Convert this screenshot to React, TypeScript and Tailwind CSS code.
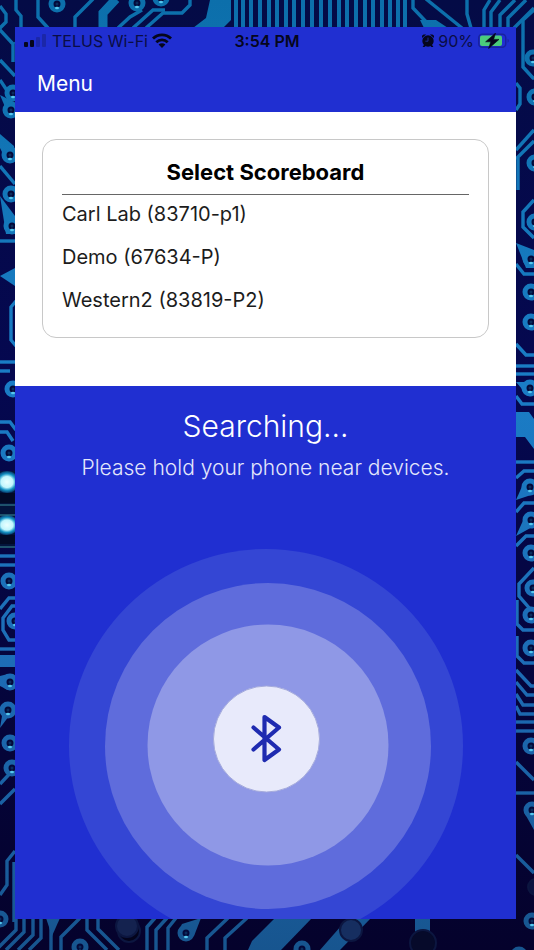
interface Scoreboard {
  id: string;
  name: string;
}

const scoreboards: Scoreboard[] = [
  { id: '83710-p1', name: 'Carl Lab' },
  { id: '67634-P', name: 'Demo' },
  { id: '83819-P2', name: 'Western2' },
];

// vertical traces along the top edge of the board
const stripes = [236, 243, 251, 260, 269, 277, 286, 294, 303, 312, 321, 330, 339, 347, 356, 365, 373, 382, 390, 398, 405];

// solder pads, [x, y]
const pads = [
  [57, 4], [137, 3], [161, -2], [13, 93], [11, 110], [10, 155], [11, 194], [12, 226], [13, 389], [9, 453],
  [9, 581], [15, 621], [10, 682], [8, 710], [10, 743], [12, 768], [0, 919], [80, 947], [186, 933], [302, 949],
  [533, 58], [535, 97], [535, 163], [535, 222], [531, 259], [531, 292], [531, 322], [530, 388], [530, 487],
  [531, 520], [531, 553], [533, 588], [531, 615], [531, 648], [531, 746], [532, 810], [532, 921], [519, 955],
];

const tracePaths = [
  // top
  'M-2 30L6 22V14L0 6', 'M16 0V10L21 16V38L15 44', 'M38 0V17L48 28', 'M75 28V17L93 -1',
  'M118 28L130 17L142 10', 'M133 28L153 10H165', 'M146 28L163 13H182L190 5V0',
  'M413 0V8L432 28', 'M426 -1L462 28', 'M467 0V14L471 28',
  'M484 28V10L490 0', 'M491 28V12L500 0', 'M500 28V15L515 0', 'M508 28V18L526 0', 'M514 28L534 8',
  // left
  'M0 30L13 44V62', 'M0 60L15 76', 'M0 80L8 92', 'M0 166L15 184', 'M0 241H16', 'M16 301L11 307V340L16 346',
  'M0 362H16', 'M0 371H10', 'M0 422H10L16 430', 'M0 432H7L13 441', 'M0 556H16', 'M0 565H16', 'M16 598H9L0 609',
  'M16 606H12L3 618V630L9 640H16', 'M0 649H16', 'M0 784L15 768', 'M0 804L15 789',
  'M15 851L7 861V885L0 895', 'M14 862V922',
  // right
  'M540 78H533L523 67V20L534 10', 'M516 83L520 88V104L516 110', 'M516 150L534 130', 'M516 159L534 141',
  'M518 158V190', 'M534 200L523 212V227L534 238', 'M516 264L524 274H534', 'M516 344L526 355H534',
  'M516 366H534', 'M516 374H534', 'M516 396L522 404H534', 'M516 462H534', 'M516 478L524 471H534',
  'M516 512L524 503H534', 'M516 546L526 536H534', 'M534 568L519 584V596L531 610', 'M517 600V624L523 630H534',
  'M517 636V656L524 663H534', 'M516 670L531 686H534', 'M516 682L527 695H534', 'M516 694L523 705H534',
  'M516 706L520 714H534', 'M516 722H534', 'M516 731H534', 'M516 762L534 780', 'M516 793H534', 'M516 855L534 873',
  // bottom
  'M16 918V930L-4 950', 'M24 918V932L6 950', 'M33 918V935L18 950', 'M41 918V938L29 950',
  'M51 918V950', 'M80 918L61 937V950', 'M87 918V930L107 950', 'M98 918V929L119 950', 'M147 950V927L155 918',
  'M156 950V930L167 918', 'M168 950V928L176 918', 'M207 950V938L228 918', 'M225 950V938L247 918',
];

function CircuitBoard() {
  return (
    <svg
      className="absolute inset-0 h-full w-full"
      viewBox="0 0 534 950"
      preserveAspectRatio="xMidYMid slice"
      aria-hidden="true"
    >
      <defs>
        <linearGradient id="board" x1="0" y1="0" x2="0" y2="1">
          <stop offset="0" stopColor="#040b46" />
          <stop offset="0.4" stopColor="#050850" />
          <stop offset="1" stopColor="#05022c" />
        </linearGradient>
        <linearGradient id="trace" gradientUnits="userSpaceOnUse" x1="0" y1="0" x2="0" y2="950">
          <stop offset="0" stopColor="#0c6fab" />
          <stop offset="0.4" stopColor="#1a7dc6" />
          <stop offset="0.7" stopColor="#1d6cb6" />
          <stop offset="1" stopColor="#17558f" />
        </linearGradient>
        <radialGradient id="glint">
          <stop offset="0" stopColor="#eaffff" />
          <stop offset="0.5" stopColor="#c2f6fd" />
          <stop offset="0.75" stopColor="#1592c4" />
          <stop offset="1" stopColor="#073a6c" />
        </radialGradient>
      </defs>
      <rect width="534" height="950" fill="url(#board)" />
      <g fill="none" stroke="url(#trace)" strokeWidth="3.4">
        {tracePaths.map(d => (
          <path key={d} d={d} />
        ))}
        <path d="M103 28V13L116 -1" strokeWidth="9" />
      </g>
      <g fill="url(#trace)">
        {stripes.map(x => (
          <rect key={x} x={x - 2} y="0" width="4" height="28" />
        ))}
        <path d="M193 28L206 18L210 0H231V20L223 28Z" />
        <path d="M420 20H436L448 28H424Z" />
        <path d="M0 95L14 102L18 112L8 114Z" />
        <path d="M0 134L14 146L16 160H6L0 148Z" />
        <path d="M0 196L15 216V234H6Z" />
        <path d="M0 276L15 268V286Z" />
        <path d="M0 655H16V667H0Z" />
        <path d="M0 676L8 674V690L0 686Z" />
        <path d="M0 728L12 712L4 704Z" />
        <path d="M516 243L534 250V268H526Z" />
        <path d="M516 382H528V396Z" />
        <path d="M516 412H529L534 419V449L525 437H516Z" />
        <path d="M516 500L524 482L534 494Z" />
        <path d="M516 536L526 514L534 526Z" />
        <path d="M524 812L534 830V804Z" />
        <path d="M46 918H60L52 936Z" />
        <path d="M178 932L182 924L201 918L194 936Z" />
        <path d="M248 950L252 941L275 918H312L281 950Z" />
        <path d="M320 950L348 918H371L340 950Z" />
        <path d="M415 918H430V940H415Z" />
      </g>
      {pads.map(([x, y]) => (
        <g key={`${x}-${y}`}>
          <circle cx={x} cy={y} r="6" fill="#03093a" stroke="url(#trace)" strokeWidth="5" />
          <circle cx={x} cy={y} r="1.5" fill="#0b2c5c" />
          <ellipse cx={x} cy={y + 4} rx="2" ry="1.2" fill="#56c8ee" />
        </g>
      ))}
      <g stroke="#0c1640" strokeWidth="2">
        <circle cx="129" cy="931" r="11" fill="#03031c" />
        <circle cx="127" cy="926" r="11" fill="#14224f" />
        <circle cx="351" cy="930" r="11" fill="#162e60" />
        <circle cx="423" cy="943" r="13" fill="#060a2a" />
        <circle cx="536" cy="887" r="8" fill="#0b1340" />
      </g>
      {/* chip pins */}
      <rect x="0" y="471" width="16" height="77" fill="#03143c" />
      <ellipse cx="7" cy="482" rx="12" ry="11" fill="url(#glint)" />
      <ellipse cx="7" cy="525" rx="12" ry="10" fill="url(#glint)" />
      <path d="M0 493H16V503H0ZM0 535H16V544H0Z" fill="#020a26" />
      <path d="M0 505H16M0 515H16M0 547H16" stroke="#3a8f9c" strokeWidth="1" />
    </svg>
  );
}

function SignalIcon() {
  return (
    <svg className="h-4 w-6" viewBox="0 0 24 16" aria-hidden="true">
      <rect x="0" y="9" width="4" height="5" rx="1" fill="#05061c" />
      <rect x="6" y="7" width="4" height="7" rx="1" fill="#05061c" />
      <rect x="12" y="4" width="4" height="10" rx="1" fill="#1b27a8" />
      <rect x="18" y="1" width="4" height="13" rx="1" fill="#1b27a8" />
    </svg>
  );
}

function WifiIcon() {
  return (
    <svg className="h-4 w-5" viewBox="0 0 20 16" aria-hidden="true">
      <g fill="none" stroke="#05061c" strokeWidth="2.8">
        <path d="M1 5.6C6 .6 14 .6 19 5.6" />
        <path d="M4.3 9.2C7.5 6.1 12.5 6.1 15.7 9.2" />
      </g>
      <path d="M10 15L6.6 11.6C8.5 9.9 11.5 9.9 13.4 11.6Z" fill="#05061c" />
    </svg>
  );
}

function AlarmIcon() {
  return (
    <svg className="h-3.5 w-3" viewBox="0 0 12 14" aria-hidden="true">
      <g fill="#05061c">
        <circle cx="6" cy="7" r="5.7" />
        <path d="M0 4V1.8L1.6 .6H4.2ZM12 4V1.8L10.4 .6H7.8Z" />
        <path d="M2.2 10.5L.6 13H2.6L4 11.6ZM9.8 10.5L11.4 13H9.4L8 11.6Z" />
      </g>
      <path d="M6 3.6V7.2H3.4" fill="none" stroke="#2334b4" strokeWidth="0.8" />
    </svg>
  );
}

function BatteryIcon() {
  return (
    <svg className="h-4 w-8" viewBox="0 0 32 16" aria-hidden="true">
      <rect x="0.75" y="1.25" width="27" height="13" rx="3.5" fill="none" stroke="#1822a0" strokeWidth="1.5" />
      <path d="M29.6 5.7C31.2 6.3 31.2 9.2 29.6 9.8Z" fill="#1822a0" />
      <rect x="2" y="2.5" width="22" height="10.5" rx="2" fill="#4bcb7c" />
      <path d="M17.6 0L7.6 8.8H12.8L10.6 15.6L21 6.4H15.6Z" fill="#05061c" stroke="#05061c" strokeWidth="0.6" />
    </svg>
  );
}

function StatusBar() {
  return (
    <div className="grid h-7 grid-cols-3 items-center pl-[9px] pr-1.5 text-base text-[#0a0d45]">
      <div className="flex items-center gap-1 whitespace-nowrap">
        <SignalIcon />
        <span>TELUS Wi-Fi</span>
        <WifiIcon />
      </div>
      <div className="text-center font-semibold text-[#05061c]">3:54 PM</div>
      <div className="flex items-center justify-end gap-1">
        <AlarmIcon />
        <span>90%</span>
        <BatteryIcon />
      </div>
    </div>
  );
}

function SearchPulse() {
  return (
    <svg className="mt-auto block w-full" viewBox="0 0 501 370" role="img" aria-label="Searching for Bluetooth devices">
      <circle cx="251" cy="197" r="197" fill="#3446d4" />
      <circle cx="253" cy="197" r="163" fill="#5f6cdc" />
      <circle cx="253" cy="196" r="120.5" fill="#8f98e6" />
      <circle cx="251.5" cy="190" r="53" fill="#e8eafb" stroke="#a5abdc" strokeWidth="1" />
      <path
        d="M238.5 178.5L264 200.5L249.5 211V168L264 178.5L238.5 200.5"
        fill="none"
        stroke="#1f2bb0"
        strokeWidth="4.2"
        strokeLinecap="round"
        strokeLinejoin="round"
      />
    </svg>
  );
}

function App() {
  return (
    <div className="relative flex min-h-screen flex-col bg-[#040b46] pt-[27px] pr-[18px] pb-[31px] pl-[15px] font-['Inter','Liberation_Sans',sans-serif]">
      <CircuitBoard />

      <div className="relative flex flex-1 flex-col bg-[#202fd1]">
        <header>
          <StatusBar />
          <nav className="flex h-[57px] items-center px-[22px]">
            <button type="button" className="text-[21px] leading-7 text-white">
              Menu
            </button>
          </nav>
        </header>

        <main className="flex flex-1 flex-col">
          <section className="bg-white px-[27px] pt-[27px] pb-12">
            <div className="rounded-[14px] border border-[#c8c8c8] px-[19px] pt-4 pb-[18px]">
              <h1 className="border-b border-[#666666] pb-1.5 text-center text-[22px] leading-8 font-bold text-black">
                Select Scoreboard
              </h1>
              <ul className="flex flex-col gap-[5px]">
                {scoreboards.map(board => (
                  <li key={board.id}>
                    <button type="button" className="block w-full text-left text-xl leading-[38px] text-[#1c1c1c]">
                      {board.name} ({board.id})
                    </button>
                  </li>
                ))}
              </ul>
            </div>
          </section>

          <section className="flex flex-1 flex-col pt-5 text-center">
            <h2 className="text-[30px] leading-10 font-light text-white">Searching...</h2>
            <p className="pt-2 text-[21px] leading-7 font-light text-[#e4e7fb]">Please hold your phone near devices.</p>
            <SearchPulse />
          </section>
        </main>
      </div>
    </div>
  );
}

export default App;
